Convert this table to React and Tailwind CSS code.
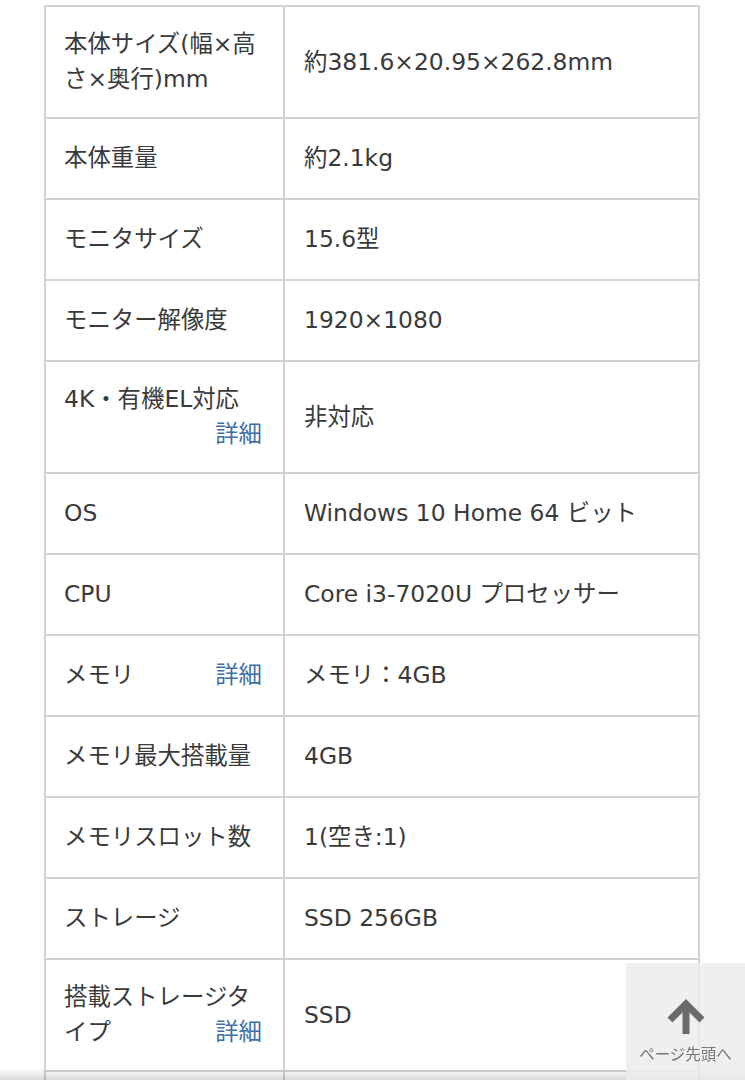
const rows = [
  { label: '本体サイズ(幅×高さ×奥行)mm', value: '約381.6×20.95×262.8mm' },
  { label: '本体重量', value: '約2.1kg' },
  { label: 'モニタサイズ', value: '15.6型' },
  { label: 'モニター解像度', value: '1920×1080' },
  { label: '4K・有機EL対応', value: '非対応', detail: true },
  { label: 'OS', value: 'Windows 10 Home 64 ビット' },
  { label: 'CPU', value: 'Core i3-7020U プロセッサー' },
  { label: 'メモリ', value: 'メモリ：4GB', detail: true },
  { label: 'メモリ最大搭載量', value: '4GB' },
  { label: 'メモリスロット数', value: '1(空き:1)' },
  { label: 'ストレージ', value: 'SSD 256GB' },
  { label: '搭載ストレージタイプ', value: 'SSD', detail: true },
  { label: '', value: '' },
]

function SpecRow({ label, value, detail }) {
  return (
    <div className="grid grid-cols-[239px_1fr]">
      <div className="flex min-h-[81px] items-center border-r-2 border-b-2 border-[#d2d2d2] py-[20px] pl-[18px] pr-[21px]">
        <div className="flow-root w-full">
          {label}
          {detail && (
            <a href="#" className="float-right text-[#3f6fa6]">
              詳細
            </a>
          )}
        </div>
      </div>
      <div className="flex min-h-[81px] items-center border-r-2 border-b-2 border-[#d2d2d2] py-[20px] pl-[19px] pr-[18px]">
        {value}
      </div>
    </div>
  )
}

export default function App() {
  return (
    <div
      className="min-h-screen bg-white pt-[5px] text-[23.4px] leading-[35px] text-[#3a3a3a]"
      style={{ fontFamily: '"DejaVu Sans", "Noto Sans CJK JP", sans-serif' }}
    >
      <div className="ml-[44px] w-[656px] border-t-2 border-l-2 border-[#d2d2d2]">
        {rows.map((row, i) => (
          <SpecRow key={i} {...row} />
        ))}
      </div>

      {/* 下部の影 */}
      <div className="pointer-events-none fixed bottom-0 left-0 right-0 h-[12px] bg-linear-to-b from-black/0 to-black/15" />

      {/* ページ先頭へ */}
      <a
        href="#"
        className="fixed right-0 bottom-0 flex h-[117px] w-[119px] flex-col items-center bg-[#ececec]/85 pt-[35px]"
      >
        <svg width="40" height="36" viewBox="0 0 40 36" fill="none" stroke="#6b6b6b" strokeWidth="7">
          <path d="M20 36V6" />
          <path d="M4 22L20 6l16 16" />
        </svg>
        <span
          className="mt-[9px] text-[15.5px] leading-[20px] text-[#777]"
          style={{ fontFamily: '"Noto Sans CJK JP", sans-serif' }}
        >
          ページ先頭へ
        </span>
      </a>
    </div>
  )
}
